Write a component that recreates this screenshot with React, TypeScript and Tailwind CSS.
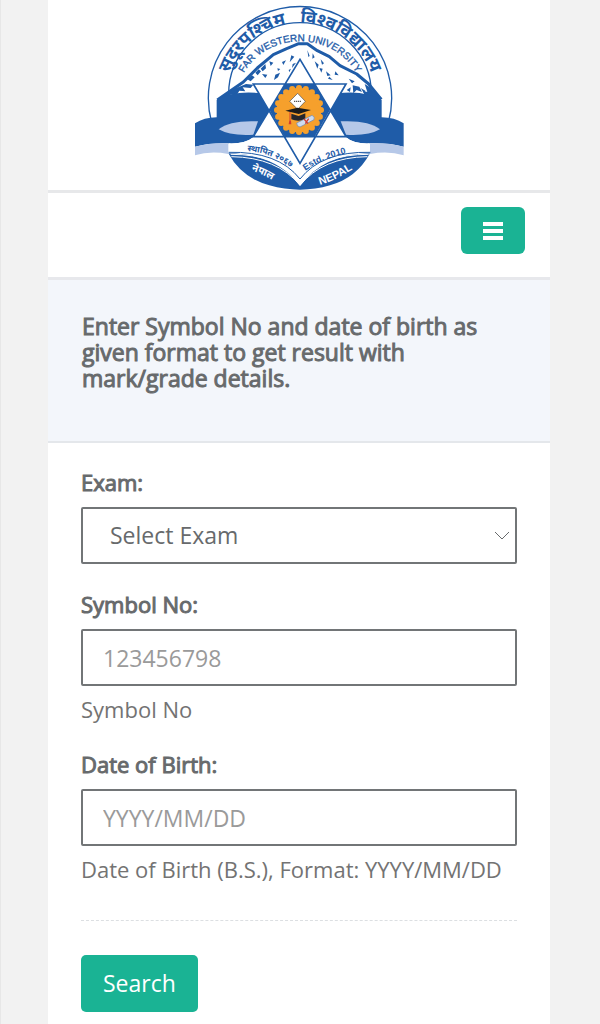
import { useState } from "react";
import type { ReactNode } from "react";

const BLUE = "#1f5ca8";
const LIGHT = "#b6c8e8";

const scallops = Array.from({ length: 20 }, (_, i) => {
  const angle = (i / 20) * Math.PI * 2;
  return { x: 327 + Math.cos(angle) * 66, y: 330 + Math.sin(angle) * 66 };
});

function UniversityLogo() {
  return (
    <svg
      viewBox="-3 0 660 570"
      className="h-[190px] w-[220px]"
      role="img"
      aria-label="Far Western University"
    >
      <defs>
        <path id="ring-outer" d="M104 320 L104 295 A226 226 0 0 1 556 295 L556 320" />
        <path id="ring-inner" d="M142 295 A188 171 0 0 1 518 295" />
        <path id="page-left" d="M172 453 Q250 458 314 512" />
        <path id="page-right" d="M346 512 Q400 474 480 457" />
        <path id="cover-left" d="M184 512 Q225 525 262 550" />
        <path id="cover-right" d="M390 555 Q440 540 500 500" />
      </defs>

      {/* rings */}
      <path d="M65 368 A275 275 0 1 1 595 368" fill="#fff" stroke={BLUE} strokeWidth="4" />
      <path d="M116 282 A214 214 0 0 1 544 282" fill="none" stroke={BLUE} strokeWidth="4" />

      {/* mountain */}
      <path
        d="M82 300 L122 272 L160 246 L202 204 L250 164 L290 146 L326 131 L352 131 L382 152 L418 170 L450 197 L500 222 L536 252 L574 298 L574 330 L82 330Z"
        fill="#fff"
      />
      <path
        d="M82 300 L122 272 L160 246 L202 204 L250 164 L290 146 L326 131 L352 131 L382 152 L418 170 L450 197 L500 222 L536 252 L574 298"
        fill="none"
        stroke={BLUE}
        strokeWidth="9"
        strokeLinejoin="round"
      />
      <path
        d="M172 238l14-12 8 6-12 12zM196 218l10-10 7 6-10 12zM212 206l14-14 2 13-10 9zM216 222l16 2-6 10zM238 184l12 4-8 10zM256 224l14-6-6 14-12 8zM276 186l12-5-8 14zM262 205l9 2-7 6zM304 166l9 4-14 17zM308 192l10-4-12 16zM296 210l7-4-5 11zM352 150l7 18-4 3zM368 160l6 12-7 4zM374 184l12 10-4 12zM388 204l10 2-4 12zM392 178l10 12-6 4zM408 214l14 12-10 2zM418 230l10 10-14-4zM436 214l10 12-12-2zM476 236l18 8-8 6zM488 256l20 4 8 16-16-6-10 10zM470 270l12-8-2 14zM512 264l14 8-4 8z"
        fill={BLUE}
      />
      <path d="M86 300 L130 268 L168 252 L190 254 L182 264 L158 262 L166 274 L148 272 L140 286 L122 284 L116 296Z" fill={BLUE} />
      <path d="M574 300 L540 262 L524 252 L532 276 L518 272 L526 290 L544 290Z" fill={BLUE} />

      {/* ribbon */}
      <path
        d="M80 300 Q130 270 216 280 L240 330 L192 410 Q165 432 115 430 Q60 428 15 440 L15 370 Q42 352 80 352Z"
        fill={BLUE}
      />
      <path
        d="M575 300 Q525 270 442 280 L418 330 L466 410 Q491 432 540 430 Q596 428 641 440 L641 370 Q614 352 575 352Z"
        fill={BLUE}
      />
      <path d="M204 364 Q120 360 86 388 Q120 408 190 404Z" fill={LIGHT} />
      <path d="M452 364 Q536 360 570 388 Q536 408 468 404Z" fill={LIGHT} />
      <path d="M15 440 Q60 428 115 430 L115 462 Q60 452 15 466Z" fill={LIGHT} />
      <path d="M641 440 Q596 428 540 430 L540 462 Q596 452 641 466Z" fill={LIGHT} />

      {/* open book */}
      <path
        d="M117 430 Q165 432 192 410 L466 410 Q491 432 538 430 L538 466 L330 556 L117 466Z"
        fill="#fff"
      />
      <path
        d="M115 460 Q260 462 330 558 Q400 462 540 460 Q500 534 420 556 Q376 569 330 569 Q284 569 238 556 Q155 534 115 460Z"
        fill={BLUE}
      />
      <path
        d="M124 470 Q262 472 330 556 Q398 472 532 470 M122 463 Q264 462 330 545 Q396 462 536 463"
        fill="none"
        stroke="#fff"
        strokeWidth="3"
      />
      <path
        d="M116 457 Q264 453 330 537 Q396 453 541 457"
        fill="none"
        stroke={BLUE}
        strokeWidth="3"
      />

      {/* star */}
      <path d="M330 178 L468 410 L190 410Z M190 252 L468 252 L330 490Z" fill="#fff" stroke={BLUE} strokeWidth="5" />
      <path d="M285 252 L375 252 L420 330 L374 410 L284 410 L238 330Z" fill={BLUE} />

      {/* emblem */}
      <g fill="#f6a02c">
        <circle cx="327" cy="330" r="67" />
        {scallops.map((dot, i) => (
          <circle key={i} cx={dot.x} cy={dot.y} r="9" />
        ))}
      </g>
      <path d="M323 280 L346 304 L323 328 L299 304Z" fill="#fff" stroke="#4b4b4b" strokeWidth="2" />
      <path d="M312 304h21" stroke="#555" strokeWidth="4" strokeDasharray="4 2" />
      <path d="M286 332 L322 323 L363 330 L326 342Z" fill="#1b1b1b" />
      <path d="M304 341 L326 348 L346 340 L346 358 Q324 366 304 358Z" fill="#25262c" />
      <path d="M300 336v28" stroke="#d43c2c" strokeWidth="3" />
      <path d="M298 362h5l1 11h-8z" fill="#d43c2c" />
      <path d="M320 369 L366 346 Q376 350 372 359 L330 381 Q320 380 320 369Z" fill="#cfdcf0" stroke="#6c83a8" strokeWidth="2" />
      <path d="M342 357l12 14M356 356l-10 15" stroke="#d43c2c" strokeWidth="4" />

      {/* lettering */}
      <g fill={BLUE} fontFamily="'Noto Sans', sans-serif" fontWeight="700">
        <text fontSize="53" textAnchor="middle">
          <textPath href="#ring-outer" startOffset="50%">
            {"सुदूरपश्चिम\u00a0\u00a0\u00a0विश्वविद्यालय"}
          </textPath>
        </text>
        <text fontSize="26">
          <textPath href="#page-left">स्थापित २०६७</textPath>
        </text>
      </g>
      <g fill={BLUE} fontFamily="'Liberation Sans', sans-serif">
        <text fontSize="30" stroke={BLUE} strokeWidth="1" textAnchor="middle">
          <textPath href="#ring-inner" startOffset="50%">FAR WESTERN UNIVERSITY</textPath>
        </text>
        <text fontSize="27" fontWeight="700">
          <textPath href="#page-right">Estd. 2010</textPath>
        </text>
      </g>
      <g fill="#fff" fontWeight="700">
        <text fontSize="30" fontFamily="'Noto Sans', sans-serif">
          <textPath href="#cover-left">नेपाल</textPath>
        </text>
        <text fontSize="33" fontFamily="'Liberation Sans', sans-serif">
          <textPath href="#cover-right">NEPAL</textPath>
        </text>
      </g>
    </svg>
  );
}

interface FieldProps {
  id: string;
  label: string;
  help?: string;
  children: ReactNode;
}

function Field({ id, label, help, children }: FieldProps) {
  return (
    <div>
      <label
        htmlFor={id}
        className="mb-[10px] block text-[22px] leading-[30px] [-webkit-text-stroke:1px_#676a6c]"
      >
        {label}
      </label>
      {children}
      {help && (
        <p id={`${id}-help`} className="mt-2 text-[22px] leading-[30px] text-[#737373]">
          {help}
        </p>
      )}
    </div>
  );
}

const controlClass =
  "block h-[57px] w-full rounded-[2px] border-2 border-[#727577] bg-white text-[23px] outline-none placeholder:text-[#9a9a9a]";

export default function App() {
  const [exam, setExam] = useState("");
  const [symbolNo, setSymbolNo] = useState("");
  const [dob, setDob] = useState("");

  return (
    <div className="min-h-screen border-l border-[#e7e7e7] bg-[#f2f2f2] pr-[50px] pl-[47px] font-['Open_Sans',sans-serif] text-[#676a6c]">
      <main className="min-h-screen bg-white">
        <header className="flex justify-center border-b-[3px] border-[#e7e8ea]">
          <UniversityLogo />
        </header>

        <nav className="flex justify-end border-b-[3px] border-[#e7e8ec] pt-[14px] pr-[25px] pb-[23px]">
          <button
            type="button"
            aria-label="Toggle navigation"
            className="flex h-[47px] w-16 items-center justify-center rounded-md bg-[#1ab394]"
          >
            <svg viewBox="0 0 20 18" className="h-[18px] w-5" fill="#fff" aria-hidden="true">
              <path d="M0 0h20v4H0zM0 7h20v4H0zM0 14h20v4H0z" />
            </svg>
          </button>
        </nav>

        <section className="border-b-2 border-[#e4e7eb] bg-[#f3f6fb] px-[34px] pt-[33px] pb-[50px]">
          <h1 className="text-[23px] leading-[26px] [-webkit-text-stroke:1px_#676a6c]">
            Enter Symbol No and date of birth as given format to get result with
            mark/grade details.
          </h1>
        </section>

        <form
          className="px-[33px] pt-6 pb-3"
          onSubmit={(event) => event.preventDefault()}
        >
          <div className="flex flex-col gap-[25px]">
            <Field id="exam" label="Exam:">
              <div className="relative">
                <select
                  id="exam"
                  value={exam}
                  onChange={(event) => setExam(event.target.value)}
                  className={`${controlClass} appearance-none pr-10 pl-[27px]`}
                >
                  <option value="">Select Exam</option>
                </select>
                <svg
                  viewBox="0 0 16 10"
                  className="pointer-events-none absolute top-6 right-[7px] h-[10px] w-4"
                  fill="none"
                  stroke="#676a6c"
                  aria-hidden="true"
                >
                  <path d="M1 1l7 7 7-7" />
                </svg>
              </div>
            </Field>

            <Field id="symbol-no" label="Symbol No:" help="Symbol No">
              <input
                id="symbol-no"
                type="text"
                placeholder="123456798"
                aria-describedby="symbol-no-help"
                value={symbolNo}
                onChange={(event) => setSymbolNo(event.target.value)}
                className={`${controlClass} px-5`}
              />
            </Field>

            <Field
              id="dob"
              label="Date of Birth:"
              help="Date of Birth (B.S.), Format: YYYY/MM/DD"
            >
              <input
                id="dob"
                type="text"
                placeholder="YYYY/MM/DD"
                aria-describedby="dob-help"
                value={dob}
                onChange={(event) => setDob(event.target.value)}
                className={`${controlClass} px-5`}
              />
            </Field>
          </div>

          <hr className="mt-9 mb-[34px] border-t border-dashed border-[#dcdfe2]" />

          <button
            type="submit"
            className="h-[57px] rounded-[5px] bg-[#1ab394] px-[22px] text-[23px] text-white"
          >
            Search
          </button>
        </form>
      </main>
    </div>
  );
}
